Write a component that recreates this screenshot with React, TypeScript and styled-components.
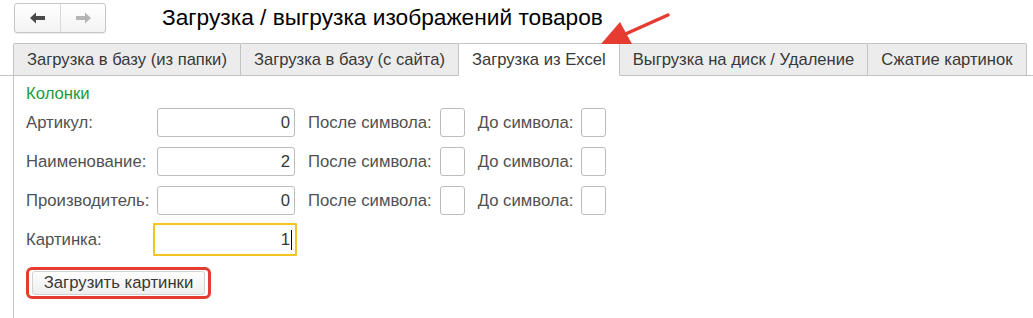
import React from 'react'
import styled, { createGlobalStyle } from 'styled-components'

const GlobalStyle = createGlobalStyle`
  body {
    margin: 0;
    background: #fff;
    font-family: "Liberation Sans", Arial, sans-serif;
  }
`

const tabs = [
  'Загрузка в базу (из папки)',
  'Загрузка в базу (с сайта)',
  'Загрузка из Excel',
  'Выгрузка на диск / Удаление',
  'Сжатие картинок',
]

const rows = [
  { label: 'Артикул:', value: '0' },
  { label: 'Наименование:', value: '2' },
  { label: 'Производитель:', value: '0' },
]

const App = () => {
  return (
    <Page>
      <GlobalStyle />
      <Header>
        <NavGroup>
          <NavButton type="button">
            <svg width="16" height="12" viewBox="0 0 16 12">
              <path d="M0 6 L6 0.5 L6 4 L15 4 L15 8 L6 8 L6 11.5 Z" fill="#4a4a4a" />
            </svg>
          </NavButton>
          <NavButton type="button">
            <svg width="16" height="12" viewBox="0 0 16 12">
              <path d="M16 6 L10 0.5 L10 4 L1 4 L1 8 L10 8 L10 11.5 Z" fill="#b5b5b5" />
            </svg>
          </NavButton>
        </NavGroup>
        <Title>Загрузка / выгрузка изображений товаров</Title>
      </Header>
      <TabBar>
        {tabs.map((t, i) => (
          <Tab key={t} active={i === 2}>
            {t}
          </Tab>
        ))}
      </TabBar>
      <Panel>
        <Group>Колонки</Group>
        {rows.map((r) => (
          <Row key={r.label}>
            <Label>{r.label}</Label>
            <Field>{r.value}</Field>
            <SubLabel>После символа:</SubLabel>
            <SmallField />
            <SubLabel>До символа:</SubLabel>
            <SmallField />
          </Row>
        ))}
        <Row>
          <Label>Картинка:</Label>
          <FocusField>
            1<Caret />
          </FocusField>
        </Row>
        <Highlight>
          <Button type="button">Загрузить картинки</Button>
        </Highlight>
      </Panel>
      <Arrow width="80" height="40" viewBox="0 0 80 40">
        <line x1="73" y1="5" x2="26" y2="26" stroke="#e53b30" strokeWidth="3.5" strokeLinecap="round" />
        <path d="M6 34 L25 12 L37 34 Z" fill="#e53b30" />
      </Arrow>
    </Page>
  )
}

const Page = styled.div`
  position: relative;
  width: 1033px;
  height: 318px;
  overflow: hidden;
  background: #fff;
`

const Header = styled.div`
  display: flex;
  align-items: flex-start;
  height: 43px;
  padding-left: 14px;
  box-sizing: border-box;
`

const NavGroup = styled.div`
  display: flex;
  margin-top: 3px;
  border: 1px solid #c6c6c6;
  border-radius: 3px;
  background: linear-gradient(#ffffff, #f3f3f3);
  box-shadow: 0 1px 1px rgba(0, 0, 0, 0.08);
`

const NavButton = styled.button`
  width: 45px;
  height: 28px;
  display: flex;
  align-items: center;
  justify-content: center;
  padding: 0;
  background: transparent;
  border: 0;
  outline: 0;
  & + & {
    border-left: 1px solid #d8d8d8;
  }
`

const Title = styled.div`
  margin-left: 56px;
  margin-top: 4px;
  font-size: 22.7px;
  color: #000;
  white-space: nowrap;
`

const TabBar = styled.div`
  display: flex;
  align-items: flex-end;
  padding-left: 13px;
  height: 33px;
  border-bottom: 1px solid #c3c3c3;
  box-sizing: border-box;
`

const Tab = styled.div<{ active?: boolean }>`
  height: ${(p) => (p.active ? '33px' : '32px')};
  margin-bottom: ${(p) => (p.active ? '-1px' : '0')};
  display: flex;
  align-items: center;
  padding: 0 13px;
  box-sizing: border-box;
  font-size: 16.6px;
  color: #383838;
  white-space: nowrap;
  background: ${(p) => (p.active ? '#fff' : '#ececec')};
  border: 1px solid #c3c3c3;
  border-bottom: ${(p) => (p.active ? '1px solid #fff' : '0')};
  border-radius: 2px 2px 0 0;
  & + & {
    margin-left: -1px;
  }
`

const Panel = styled.div`
  margin-left: 13px;
  border-left: 1px solid #c3c3c3;
  padding: 8px 0 0 12px;
  height: 243px;
  box-sizing: border-box;
  display: flex;
  flex-direction: column;
  align-items: flex-start;
`

const Group = styled.div`
  font-size: 16.7px;
  color: #1d9a3c;
  line-height: 20px;
  margin-bottom: 4px;
`

const Row = styled.div`
  display: flex;
  align-items: center;
  height: 29px;
  margin-bottom: 10px;
`

const Label = styled.div`
  width: 131px;
  font-size: 16.7px;
  color: #505050;
  white-space: nowrap;
`

const Field = styled.div`
  width: 138px;
  height: 29px;
  box-sizing: border-box;
  border: 1px solid #bcbcbc;
  border-radius: 3px;
  background: #fff;
  display: flex;
  align-items: center;
  justify-content: flex-end;
  padding-right: 4px;
  font-size: 16.7px;
  color: #383838;
`

const FocusField = styled(Field)`
  width: 144px;
  height: 33px;
  margin-left: -4px;
  border: 2px solid #f5c421;
  border-radius: 1px;
  padding-right: 0;
`

const Caret = styled.span`
  display: inline-block;
  width: 1px;
  height: 20px;
  background: #000;
  margin-left: 1px;
  margin-right: 3px;
`

const SubLabel = styled.div`
  margin-left: 13px;
  margin-right: 8px;
  font-size: 16.7px;
  color: #505050;
  white-space: nowrap;
`

const SmallField = styled(Field)`
  width: 25px;
`

const Highlight = styled.div`
  margin-top: 3px;
  border: 3px solid #e53b30;
  border-radius: 6px;
  padding: 1px 3px;
`

const Button = styled.button`
  width: 173px;
  height: 24px;
  border: 1px solid #d2d2d2;
  border-radius: 3px;
  background: linear-gradient(#ffffff, #eeeeee);
  font-family: "Liberation Sans", Arial, sans-serif;
  font-size: 16.7px;
  color: #383838;
  padding: 0;
`

const Arrow = styled.svg`
  position: absolute;
  left: 595px;
  top: 10px;
`

export default App
